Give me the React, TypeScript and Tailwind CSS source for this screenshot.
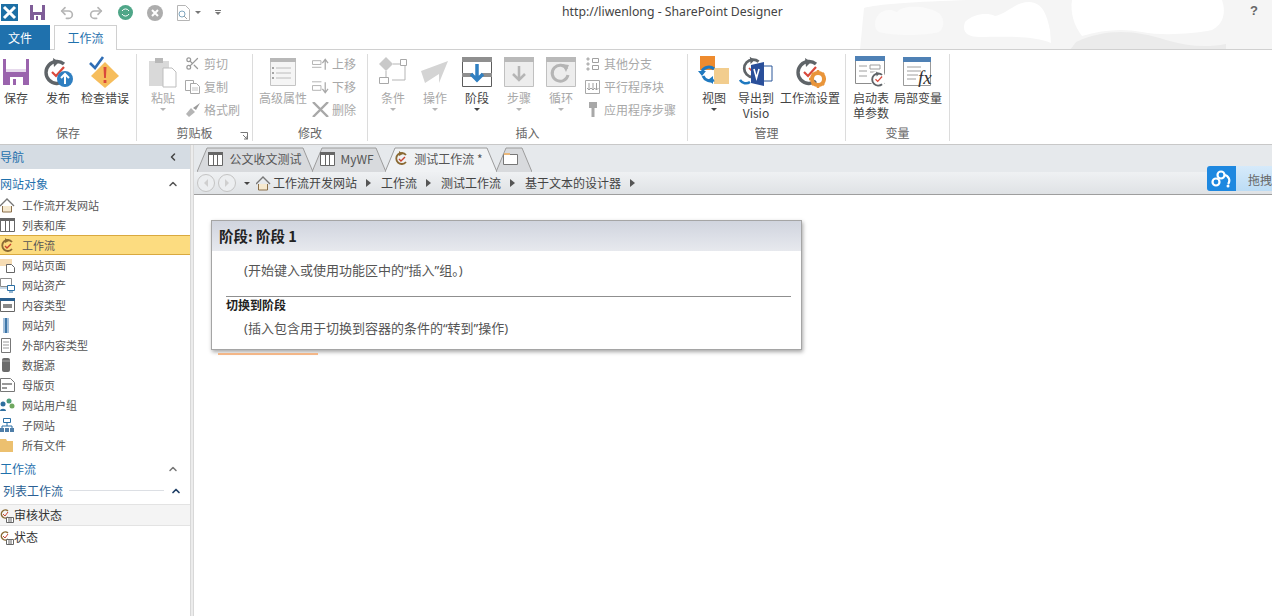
import { Scissors, Undo2, Redo2, ChevronUp, ChevronLeft } from 'lucide-react'
import type { ReactNode } from 'react'

const cjk = "font-['Noto_Sans_CJK_SC','Noto_Sans',sans-serif]"

// Circular arrow used by the workflow commands
function WorkflowArc({ x = 0, y = 0, s = 1, color = '#5f6468' }: { x?: number; y?: number; s?: number; color?: string }) {
  return (
    <g transform={`translate(${x} ${y}) scale(${s})`}>
      <path d="M22 7A11 11 0 1 0 22 24" fill="none" stroke={color} strokeWidth="3.4" />
      <path d="M11 1l6 4-5 5z" fill={color} />
      <path d="M10 15l4 4 8-9" fill="none" stroke="#d9483b" strokeWidth="2.2" />
    </g>
  )
}

function SaveBig() {
  return (
    <svg width="26" height="26" viewBox="0 0 26 26">
      <path d="M0 0h26v26H0z" fill="#9a63ad" />
      <path d="M3 0h20v13H3z" fill="#fff" />
      <path d="M3 10h20v3H3z" fill="#e6d9ec" />
      <path d="M7 18h13v8H7z" fill="#fff" />
      <path d="M10 20h3v6h-3z" fill="#9a63ad" />
    </svg>
  )
}

function PublishIcon() {
  return (
    <svg width="32" height="32" viewBox="0 0 32 32">
      <WorkflowArc x={0} y={1} />
      <circle cx="23" cy="23" r="8" fill="#2f7fc1" />
      <path d="M23 28v-9M19 22l4-4 4 4" fill="none" stroke="#fff" strokeWidth="2" />
    </svg>
  )
}

function CheckErrorIcon() {
  return (
    <svg width="32" height="32" viewBox="0 0 32 32">
      <path d="M16 6l14 14-14 12L2 20z" fill="#f6bd5c" />
      <path d="M14.5 11h3l-.6 11h-1.800zM14.600 24h2.800v3h-2.800z" fill="#d9483b" />
      <path d="M1 7l5 5 8-11" fill="none" stroke="#2f6db5" strokeWidth="2.6" />
    </svg>
  )
}

function PasteIcon() {
  return (
    <svg width="30" height="32" viewBox="0 0 30 32">
      <path d="M1 5h20v25H1z" fill="#d9d9d9" />
      <path d="M7 2h8v5H7z" fill="#b8b8b8" />
      <path d="M15 12h9l4 4v15H15z" fill="#fff" stroke="#bdbdbd" />
    </svg>
  )
}

function ListWindow() {
  return (
    <svg width="26" height="28" viewBox="0 0 26 28">
      <path d="M.5 .5h25v27H.5z" fill="#f5f5f5" stroke="#c4c4c4" />
      <path d="M0 0h26v4H0z" fill="#b8b8b8" />
      <path d="M6 10h15M6 15h15M6 20h15" stroke="#bcbcbc" />
      <path d="M2 9h2v2H2zM2 14h2v2H2zM2 19h2v2H2z" fill="#a5a5a5" />
    </svg>
  )
}

function ConditionIcon() {
  return (
    <svg width="30" height="30" viewBox="0 0 30 30">
      <path d="M8 0l7 7-7 7-7-7z" fill="#c9c9c9" />
      <path d="M15 7h8M8 14v9M14 23h13V9" fill="none" stroke="#b5b5b5" />
      <path d="M22.500 2.500h6v6h-6zM1.500 20.500h9v6h-9z" fill="#fff" stroke="#a8a8a8" />
    </svg>
  )
}

function ActionIcon() {
  return (
    <svg width="30" height="24" viewBox="0 0 30 24">
      <path d="M1 11L28 1 19 23v-9L5 23z" fill="#d4d4d4" />
    </svg>
  )
}

function StageIcon() {
  return (
    <svg width="30" height="30" viewBox="0 0 30 30">
      <path d="M.5 .5h29v29H.5z" fill="#fff" stroke="#5c5c5c" />
      <path d="M0 0h30v5H0zM0 16h11v4H0zM19 16h11v4H19z" fill="#8f8f8f" />
      <path d="M15 7v15M9 17l6 6 6-6" fill="none" stroke="#2f7fc1" strokeWidth="3.500" />
    </svg>
  )
}

function GrayWindow({ loop }: { loop?: boolean }) {
  return (
    <svg width="30" height="30" viewBox="0 0 30 30">
      <path d="M.5 .5h29v29H.5z" fill="#ededed" stroke="#c0c0c0" />
      <path d="M0 0h30v5H0z" fill="#b9b9b9" />
      {loop ? (
        <>
          <path d="M21 12a8 8 0 1 0 1 6" fill="none" stroke="#b5b5b5" strokeWidth="3" />
          <path d="M16 7l7 1-3 7z" fill="#b5b5b5" />
        </>
      ) : (
        <path d="M15 9v13M9 17l6 6 6-6" fill="none" stroke="#b5b5b5" strokeWidth="2.500" />
      )}
    </svg>
  )
}

function ViewIcon() {
  return (
    <svg width="32" height="32" viewBox="0 0 32 32">
      <path d="M2 0h15v14H2z" fill="#ee8b2e" />
      <path d="M16 12h15v16H16z" fill="#f2cd8e" />
      <path d="M16 13a8 8 0 0 0-12 2M5 20a8 8 0 0 0 11 4" fill="none" stroke="#1f79c0" strokeWidth="3" />
      <path d="M0 15h8l-4 5zM15 20v8l-5-4z" fill="#1f79c0" />
    </svg>
  )
}

function VisioIcon() {
  return (
    <svg width="34" height="32" viewBox="0 0 34 32">
      <WorkflowArc x={2} y={0} s={0.8} />
      <path d="M1 24a7 7 0 0 0 10 2" fill="none" stroke="#1f79c0" strokeWidth="2.500" />
      <path d="M22 10h11v15H22z" fill="#fff" stroke="#2a5699" />
      <path d="M12 9l13-3v24l-13-3z" fill="#2a4f9a" />
      <path d="M15 13l2.500 9 2.500-9" fill="none" stroke="#fff" strokeWidth="1.600" />
    </svg>
  )
}

function WorkflowSettings() {
  return (
    <svg width="32" height="32" viewBox="0 0 32 32">
      <WorkflowArc x={0} y={1} />
      <circle cx="24" cy="23" r="6" fill="none" stroke="#e9953a" strokeWidth="4" />
      <path d="M24 14v3M24 29v3M15 23h3M30 23h2M18 17l2 2M28 27l2 2M30 17l-2 2M20 27l-2 2" stroke="#e9953a" strokeWidth="2.500" />
    </svg>
  )
}

function FormParams() {
  return (
    <svg width="32" height="32" viewBox="0 0 32 32">
      <path d="M.5 .5h29v27H.5z" fill="#fff" stroke="#8c8c8c" />
      <path d="M0 0h30v5H0z" fill="#4f81b5" />
      <path d="M4 10h8M4 15h8M4 20h8M15 9h10v4H15zM15 16h6" fill="none" stroke="#9e9e9e" />
      <circle cx="23" cy="23" r="8" fill="#fff" />
      <WorkflowArc x={15} y={15} s={0.55} />
    </svg>
  )
}

function LocalVars() {
  return (
    <svg width="30" height="30" viewBox="0 0 30 30">
      <path d="M.5 .5h27v28H.5z" fill="#fff" stroke="#9a9a9a" />
      <path d="M0 0h28v5H0z" fill="#4f81b5" />
      <path d="M4 10h14M4 14h14M4 18h11M4 22h9" stroke="#9e9e9e" />
      <text x="15" y="27" fontSize="19" fontStyle="italic" fontFamily="Liberation Serif, serif" fill="#333">fx</text>
    </svg>
  )
}

function Caret({ gray }: { gray?: boolean }) {
  return <span className={`mt-[3px] h-0 w-0 border-x-[3px] border-t-[3px] border-x-transparent ${gray ? 'border-t-[#b5b5b5]' : 'border-t-[#444]'}`} />
}

function BigButton({ w, icon, label, gray, caret }: { w: number; icon: ReactNode; label: ReactNode; gray?: boolean; caret?: boolean }) {
  return (
    <div className="flex flex-col items-center" style={{ width: w }}>
      <div className="flex h-[32px] items-center justify-center">{icon}</div>
      <div className={`mt-[2px] whitespace-nowrap text-center text-[12px] leading-[15px] ${gray ? 'text-[#a8a8a8]' : 'text-[#444]'}`}>{label}</div>
      {caret && <Caret gray={gray} />}
    </div>
  )
}

function SmallButton({ icon, label }: { icon: ReactNode; label: string }) {
  return (
    <div className="flex h-[23px] items-center gap-[3px] whitespace-nowrap text-[12px] text-[#a8a8a8]">
      <span className="flex w-[17px] justify-center">{icon}</span>
      {label}
    </div>
  )
}

function Group({ w, title, launcher, children }: { w: number; title: string; launcher?: boolean; children: ReactNode }) {
  return (
    <div className="relative flex h-[87px] shrink-0 flex-col border-r border-[#dcdcdc]" style={{ width: w }}>
      <div className="flex h-[71px] pt-[2px]">{children}</div>
      <div className="text-center text-[12px] leading-[16px] text-[#666]">{title}</div>
      {launcher && (
        <svg className="absolute bottom-[1px] right-[4px]" width="8" height="8" viewBox="0 0 8 8">
          <path d="M.5 .5h7v7M3 3l4 4M7 4v3H4" fill="none" stroke="#777" />
        </svg>
      )}
    </div>
  )
}

function Ribbon() {
  return (
    <div className="flex h-[95px] border-b border-[#c8c8c8] bg-white pt-[4px]">
      <Group w={137} title="保存">
        <BigButton w={32} icon={<SaveBig />} label="保存" />
        <BigButton w={52} icon={<PublishIcon />} label="发布" />
        <BigButton w={42} icon={<CheckErrorIcon />} label="检查错误" />
      </Group>
      <Group w={116} title="剪贴板" launcher>
        <div className="ml-[11px] mr-[6px]">
          <BigButton w={30} icon={<PasteIcon />} label="粘贴" gray caret />
        </div>
        <div className="-mt-[4px] flex flex-col">
          <SmallButton icon={<Scissors size={15} color="#9a9a9a" />} label="剪切" />
          <SmallButton
            icon={
              <svg width="16" height="15" viewBox="0 0 16 15">
                <path d="M.5 1.500h8v10h-8z" fill="#fff" stroke="#a8a8a8" />
                <path d="M5.500 4.500h6l3 3v7h-9z" fill="#fff" stroke="#a8a8a8" />
                <path d="M7 9h6M7 11h6" stroke="#c4c4c4" />
              </svg>
            }
            label="复制"
          />
          <SmallButton
            icon={
              <svg width="16" height="15" viewBox="0 0 16 15">
                <path d="M1 12l5-6 4 4-6 5z" fill="#b5b5b5" />
                <path d="M8 6l7-5-4 7z" fill="#9a9a9a" />
              </svg>
            }
            label="格式刷"
          />
        </div>
      </Group>
      <Group w={115} title="修改">
        <div className="ml-[5px] mr-[4px]">
          <BigButton w={50} icon={<ListWindow />} label="高级属性" gray />
        </div>
        <div className="-mt-[4px] flex flex-col">
          <SmallButton
            icon={
              <svg width="18" height="14" viewBox="0 0 18 14">
                <path d="M.5 3.500h9v4h-9zM0 10.500h10" fill="none" stroke="#b0b0b0" />
                <path d="M14 13V3M11 6l3-4 3 4" fill="none" stroke="#a8a8a8" strokeWidth="1.300" />
              </svg>
            }
            label="上移"
          />
          <SmallButton
            icon={
              <svg width="18" height="14" viewBox="0 0 18 14">
                <path d="M0 1.500h10M.5 5.500h9v5h-9z" fill="none" stroke="#b0b0b0" />
                <path d="M14 2v10M11 9l3 4 3-4" fill="none" stroke="#a8a8a8" strokeWidth="1.300" />
              </svg>
            }
            label="下移"
          />
          <SmallButton
            icon={
              <svg width="17" height="15" viewBox="0 0 17 15">
                <path d="M1 0l15 15M16 0L1 15" stroke="#a8a8a8" strokeWidth="2.400" />
              </svg>
            }
            label="删除"
          />
        </div>
      </Group>
      <Group w={320} title="插入">
        <div className="ml-[4px] flex">
          <BigButton w={42} icon={<ConditionIcon />} label="条件" gray caret />
          <BigButton w={42} icon={<ActionIcon />} label="操作" gray caret />
          <BigButton w={42} icon={<StageIcon />} label="阶段" caret />
          <BigButton w={42} icon={<GrayWindow />} label="步骤" gray caret />
          <BigButton w={42} icon={<GrayWindow loop />} label="循环" gray caret />
        </div>
        <div className="-mt-[4px] ml-[2px] flex flex-col">
          <SmallButton
            icon={
              <svg width="14" height="14" viewBox="0 0 14 14">
                <path d="M2 0l2 2-2 2-2-2zM2 5l2 2-2 2-2-2zM2 10l2 2-2 2-2-2z" fill="#b5b5b5" />
                <path d="M6.500 1.500h6v4h-6zM6.500 8.500h6v4h-6z" fill="#fff" stroke="#a0a0a0" />
              </svg>
            }
            label="其他分支"
          />
          <SmallButton
            icon={
              <svg width="15" height="14" viewBox="0 0 15 14">
                <path d="M.5 .5h14v13H.5z" fill="#fff" stroke="#a8a8a8" />
                <path d="M4 3v7M2 8l2 2 2-2M8 3v7M6 8l2 2 2-2M11.500 3v7M9.500 8l2 2 2-2" fill="none" stroke="#a0a0a0" />
              </svg>
            }
            label="平行程序块"
          />
          <SmallButton
            icon={
              <svg width="10" height="15" viewBox="0 0 10 15">
                <path d="M1 0h8v6H6.500v9h-3V6H1z" fill="#a8a8a8" />
              </svg>
            }
            label="应用程序步骤"
          />
        </div>
      </Group>
      <Group w={158} title="管理">
        <div className="ml-[5px] flex">
          <BigButton w={42} icon={<ViewIcon />} label="视图" caret />
          <BigButton w={42} icon={<VisioIcon />} label={<>导出到<br />Visio</>} />
          <BigButton w={66} icon={<WorkflowSettings />} label="工作流设置" />
        </div>
      </Group>
      <Group w={104} title="变量">
        <div className="ml-[4px] flex">
          <BigButton w={42} icon={<FormParams />} label={<>启动表<br />单参数</>} />
          <BigButton w={52} icon={<LocalVars />} label="局部变量" />
        </div>
      </Group>
    </div>
  )
}

function QuickAccess() {
  return (
    <div className="relative flex h-[25px] items-center bg-white">
      {/* cloud pattern behind the right end of the title bar */}
      <svg className="absolute right-0 top-0" width="412" height="50" viewBox="0 0 412 50">
        <path d="M0 50L4 8C40-4 380-4 412 0v50z" fill="#f5f5f5" />
        <path d="M15 24c0-10 10-18 22-12 6-8 30-6 40 0 8 4 8 16 2 20-14 4-46 4-60 0-3-2-4-4-4-8z" fill="#fafafa" />
        <path d="M105 22c8-8 22-10 30-6 12-2 20-14 34-14 14 0 18 14 21 28l1 13c-18-8-50-6-72-6-10 0-18-4-14-15z" fill="#fff" />
        <path d="M212 0h150c4 12 2 24-10 30-20 4-50 6-70 2-20-4-40-2-60 4-8-10-12-24-10-36z" fill="#fff" />
        <path d="M216 42c30-14 60-12 90-2 20 6 40 8 60 4v6H210z" fill="#ebebeb" />
      </svg>
      <div className="relative flex w-[18px] items-center justify-center">
        <svg width="17" height="17" viewBox="0 0 17 17">
          <path d="M0 0h17v17H0z" fill="#1d6fa5" />
          <path d="M3 3l11 11M14 3L3 14" stroke="#fff" strokeWidth="3" />
        </svg>
      </div>
      <div className="relative ml-[12px] flex items-center">
        <svg width="15" height="15" viewBox="0 0 15 15">
          <path d="M0 0h15v15H0z" fill="#7f5d98" />
          <path d="M3 0h9v7H3zM4 10h7v5H4z" fill="#fff" />
          <path d="M6 11h2v4H6z" fill="#7f5d98" />
        </svg>
        <Undo2 className="ml-[14px]" size={16} color="#b5b5b5" strokeWidth={2.5} />
        <Redo2 className="ml-[13px]" size={16} color="#b5b5b5" strokeWidth={2.5} />
        <svg className="ml-[14px]" width="15" height="15" viewBox="0 0 15 15">
          <circle cx="7.500" cy="7.500" r="7.500" fill="#4fa688" />
          <path d="M4 6a4 4 0 0 1 7 0M11 9a4 4 0 0 1-7 0" fill="none" stroke="#fff" />
        </svg>
        <svg className="ml-[14px]" width="16" height="16" viewBox="0 0 16 16">
          <circle cx="8" cy="8" r="8" fill="#adadad" />
          <path d="M5 5l6 6M11 5l-6 6" stroke="#fff" strokeWidth="2" />
        </svg>
        <svg className="ml-[13px]" width="16" height="16" viewBox="0 0 16 16">
          <path d="M1.500 .5h8l4 4v11h-12z" fill="#fff" stroke="#b5b5b5" />
          <circle cx="6" cy="9" r="3" fill="none" stroke="#7fa6bf" />
          <path d="M8 11l3 3" stroke="#a0a0a0" />
        </svg>
        <span className="ml-[3px] h-0 w-0 border-x-[3px] border-t-[3px] border-x-transparent border-t-[#777]" />
        <span className="ml-[14px] flex flex-col items-center gap-[1px]">
          <span className="h-px w-[6px] bg-[#777]" />
          <span className="h-0 w-0 border-x-[3px] border-t-[3px] border-x-transparent border-t-[#777]" />
        </span>
      </div>
      <div className="absolute left-[562px] top-[3px] font-['Noto_Sans',sans-serif] text-[12.25px] leading-[18px] whitespace-nowrap text-[#444]">http://liwenlong - SharePoint Designer</div>
      <div className="absolute right-[14px] top-[1px] font-['Liberation_Sans',sans-serif] text-[13px] font-bold text-[#666]">?</div>
    </div>
  )
}

function RibbonTabs() {
  return (
    <div className="relative flex h-[25px] border-b border-[#d0d0d0]">
      <div className="flex h-[25px] w-[50px] items-center bg-[#1f71ad] pl-[8px] text-[12px] text-white">文件</div>
      <div className="relative ml-[4px] flex h-[25px] w-[63px] items-center justify-center border-x border-t border-[#d0d0d0] bg-white text-[12px] text-[#1f71ad]">工作流</div>
    </div>
  )
}

const SiteIcons: Record<string, ReactNode> = {
  home: (
    <svg width="15" height="15" viewBox="0 0 15 15">
      <path d="M2.500 8v6h9V8" fill="#f6e9cf" stroke="#8a6f4a" />
      <path d="M0 8l7-7 7 7" fill="none" stroke="#777" strokeWidth="1.400" />
    </svg>
  ),
  table: (
    <svg width="15" height="14" viewBox="0 0 15 14">
      <path d="M.5 .5h14v13H.5z" fill="#fff" stroke="#666" />
      <path d="M0 0h15v3H0z" fill="#666" />
      <path d="M5.500 3v10M9.500 3v10" stroke="#666" />
    </svg>
  ),
  flow: (
    <svg width="15" height="15" viewBox="0 0 15 15">
      <path d="M12 4a5.500 5.500 0 1 0 0 7" fill="none" stroke="#8a6a34" strokeWidth="1.800" />
      <path d="M5 0l4 3-4 2z" fill="#8a6a34" />
      <path d="M5 8l2 2 4-4" fill="none" stroke="#c8432f" strokeWidth="1.400" />
    </svg>
  ),
  page: (
    <svg width="15" height="15" viewBox="0 0 15 15">
      <path d="M0 1h12v7H0z" fill="#f6dcb4" />
      <path d="M6.500 6.500h5l3 3v5h-8z" fill="#fff" stroke="#666" />
    </svg>
  ),
  assets: (
    <svg width="15" height="15" viewBox="0 0 15 15">
      <path d="M.5 .5h11v8H.5z" fill="#fff" stroke="#8c8c8c" />
      <path d="M0 9h7v2H0z" fill="#c9d9e6" />
      <path d="M7.500 7.500h7v5h-7z" fill="#fff" stroke="#2a6fa5" />
      <path d="M9 14h4" stroke="#2a6fa5" />
    </svg>
  ),
  ctype: (
    <svg width="15" height="14" viewBox="0 0 15 14">
      <path d="M.5 .5h14v13H.5z" fill="#fff" stroke="#666" />
      <path d="M0 0h15v3H0z" fill="#2a5f8e" />
      <path d="M3 6h9v4H3z" fill="#888" />
    </svg>
  ),
  column: (
    <svg width="15" height="15" viewBox="0 0 15 15">
      <path d="M3 0h6v15H3z" fill="#a5c1dc" />
      <path d="M5 0h2v15H5z" fill="#3e76a8" />
    </svg>
  ),
  external: (
    <svg width="15" height="15" viewBox="0 0 15 15">
      <path d="M1.500 .5h9v14h-9z" fill="#fff" stroke="#777" />
      <path d="M3 4h6M3 7h6M3 10h6" stroke="#999" />
    </svg>
  ),
  db: (
    <svg width="15" height="15" viewBox="0 0 15 15">
      <rect x="2" y="0" width="8" height="14" rx="2" fill="#6b6b6b" />
      <path d="M2 3h8" stroke="#a5a5a5" />
    </svg>
  ),
  master: (
    <svg width="15" height="14" viewBox="0 0 15 14">
      <path d="M.5 .5h10l4 4v9H.5z" fill="#fff" stroke="#777" />
      <path d="M2 5h10v2H2zM2 9h5v2H2z" fill="#999" />
    </svg>
  ),
  group: (
    <svg width="15" height="14" viewBox="0 0 15 14">
      <circle cx="3" cy="6" r="2.500" fill="#2f6f9f" />
      <circle cx="9" cy="3" r="2.500" fill="#4e9b7a" />
      <circle cx="12" cy="8" r="2.500" fill="#6fa85f" />
      <path d="M0 13c0-3 6-3 6 0z" fill="#2f6f9f" />
    </svg>
  ),
  sub: (
    <svg width="15" height="14" viewBox="0 0 15 14">
      <path d="M3.500 .5h7v4h-7zM7 5v3M2 8h10v2M2 8v2" fill="none" stroke="#2a6fa5" />
      <path d="M0 10h4v4H0zM5 10h4v4H5zM10 10h4v4h-4z" fill="#4f7ea8" />
    </svg>
  ),
  files: (
    <svg width="15" height="13" viewBox="0 0 15 13">
      <path d="M0 0h6l1 2h6v11H0z" fill="#ecc06f" />
    </svg>
  ),
}

const siteObjects = [
  ['home', '工作流开发网站'],
  ['table', '列表和库'],
  ['flow', '工作流'],
  ['page', '网站页面'],
  ['assets', '网站资产'],
  ['ctype', '内容类型'],
  ['column', '网站列'],
  ['external', '外部内容类型'],
  ['db', '数据源'],
  ['master', '母版页'],
  ['group', '网站用户组'],
  ['sub', '子网站'],
  ['files', '所有文件'],
]

function ListFlowIcon() {
  return (
    <svg className="shrink-0" width="14" height="15" viewBox="0 0 14 15">
      <path d="M8 3a4 4 0 1 0 0 6" fill="none" stroke="#8a6a34" strokeWidth="1.500" />
      <path d="M3 6l2 2 3-4" fill="none" stroke="#c8432f" />
      <path d="M6.500 9.500h7v5h-7z" fill="#fff" stroke="#666" />
      <path d="M9 10v4M11 10v4" stroke="#666" />
    </svg>
  )
}

function NavPane() {
  return (
    <aside className="w-[190px] shrink-0 bg-white">
      <div className="flex h-[24px] items-center justify-between bg-[#d5dce3] pr-[11px]">
        <span className="text-[12px] text-[#1f71ad]">导航</span>
        <ChevronLeft size={12} color="#444" strokeWidth={3} />
      </div>
      <div className="flex h-[30px] items-center justify-between pr-[11px]">
        <span className="text-[12px] text-[#1f71ad]">网站对象</span>
        <ChevronUp size={12} color="#555" strokeWidth={3} />
      </div>
      <div className="-mt-[4px]">
        {siteObjects.map(([icon, label]) => (
          <div
            key={label}
            className={`flex h-[20px] items-center text-[11px] text-[#555] ${label === '工作流' ? 'border-y border-[#d9a93f] bg-[#fcdc80]' : ''}`}
          >
            <span className="flex w-[22px] items-center">{SiteIcons[icon]}</span>
            {label}
          </div>
        ))}
      </div>
      <div className="flex h-[25px] items-center justify-between pr-[11px] pt-[2px]">
        <span className="text-[12px] text-[#1f71ad]">工作流</span>
        <ChevronUp size={12} color="#777" strokeWidth={3} />
      </div>
      <div className="flex h-[21px] items-center pl-[3px] pr-[8px]">
        <span className="text-[12px] text-[#2b5f94]">列表工作流</span>
        <span className="mx-[6px] h-px flex-1 bg-[#dcdfe4]" />
        <ChevronUp size={12} color="#1f3f66" strokeWidth={3.5} />
      </div>
      <div className="mt-[3px] flex h-[22px] items-center border-y border-[#e3e3e3] bg-[#f4f4f4] text-[12px] text-[#333]">
        <ListFlowIcon />
        审核状态
      </div>
      <div className="flex h-[22px] items-center text-[12px] text-[#333]">
        <ListFlowIcon />
        状态
      </div>
    </aside>
  )
}

function DocTab({ w, active, shift = 0, children }: { w: number; active?: boolean; shift?: number; children: ReactNode }) {
  return (
    <div className="relative -ml-[1px] flex h-[25px] items-center justify-center" style={{ width: w }}>
      <svg className="absolute inset-0 h-full w-full" viewBox={`0 0 ${w} 25`} preserveAspectRatio="none">
        <path
          d={`M0 25L10 1H${w - 10}L${w} 25`}
          fill={active ? '#f0f2f4' : '#d8dadd'}
          stroke="#9c9c9c"
        />
      </svg>
      <div className="relative -mt-[2px] flex items-center gap-[5px] text-[12px] text-[#555]" style={{ paddingRight: shift }}>{children}</div>
    </div>
  )
}

function Crumb({ children }: { children: ReactNode }) {
  return (
    <>
      <span className="whitespace-nowrap text-[12px] text-[#444]">{children}</span>
      <span className="ml-[9px] mr-[10px] h-0 w-0 border-y-[4px] border-l-[5px] border-y-transparent border-l-[#555]" />
    </>
  )
}

function HistoryButton({ forward }: { forward?: boolean }) {
  return (
    <span className="flex h-[18px] w-[18px] items-center justify-center rounded-full border border-[#c4c4c4] bg-[#eceef0]">
      <span className={`h-0 w-0 border-y-[4px] border-y-transparent ${forward ? 'border-l-[4px] border-l-[#cfcfcf]' : 'border-r-[4px] border-r-[#cfcfcf]'}`} />
    </span>
  )
}

function StageCard() {
  return (
    <div className="relative ml-[17px] mt-[25px] w-[591px]">
      <div className="border border-[#a5a5a5] bg-white shadow-[1px_2px_4px_rgba(0,0,0,0.35)]">
        <div className="flex h-[30px] items-center bg-gradient-to-b from-[#d0d4de] to-[#e7e9ee] pl-[7px] text-[14.5px] font-bold text-[#222]">阶段: 阶段 1</div>
        <div className="h-[98px] pl-[14px] pr-[10px] text-[#555]">
          <div className="pl-[18px] pt-[10px] font-['Noto_Sans','Noto_Sans_CJK_SC',sans-serif] text-[13px] leading-[18px]">(开始键入或使用功能区中的“插入”组。)</div>
          <div className="mt-[17px] border-t border-[#8f8f8f] text-[12px] font-bold leading-[16px] text-[#222]">切换到阶段</div>
          <div className="pl-[18px] pt-[6px] font-['Noto_Sans','Noto_Sans_CJK_SC',sans-serif] text-[13px] leading-[18px]">(插入包含用于切换到容器的条件的“转到”操作)</div>
        </div>
      </div>
      <div className="ml-[7px] mt-[3px] h-[2px] w-[100px] bg-[#f3b687]" />
    </div>
  )
}

export default function App() {
  return (
    <div className={`relative h-[616px] w-[1272px] overflow-hidden bg-white ${cjk}`}>
      <QuickAccess />
      <RibbonTabs />
      <Ribbon />
      <div className="flex h-[471px]">
        <NavPane />
        <div className="w-[4px] shrink-0 border-x border-[#d8d8d8] bg-[#ececec]" />
        <main className="min-w-0 flex-1">
          <div className="flex h-[27px] items-end bg-[#e6e9ec] pl-[4px]">
            <DocTab w={116}>{SiteIcons.table}<span className="ml-[1px]">公文收文测试</span></DocTab>
            <DocTab w={74} shift={4}>{SiteIcons.table}MyWF</DocTab>
            <DocTab w={112} active shift={5}>{SiteIcons.flow}测试工作流 *</DocTab>
            <DocTab w={36} shift={8}>
              <svg width="15" height="13" viewBox="0 0 15 13">
                <path d="M.5 2.500h14v10H.5z" fill="#fff" stroke="#777" />
                <path d="M1 1h6v2H1z" fill="#e9b77a" />
              </svg>
            </DocTab>
          </div>
          <div className="flex h-[23px] items-center border-b border-[#9e9e9e] bg-gradient-to-b from-[#eff1f3] to-[#dfe2e5] pl-[3px]">
            <HistoryButton />
            <span className="ml-[3px]"><HistoryButton forward /></span>
            <span className="ml-[8px] mr-[6px] h-0 w-0 border-x-[3px] border-t-[3px] border-x-transparent border-t-[#444]" />
            <span className="mr-[2px]">{SiteIcons.home}</span>
            <Crumb>工作流开发网站</Crumb>
            <Crumb>工作流</Crumb>
            <Crumb>测试工作流</Crumb>
            <Crumb>基于文本的设计器</Crumb>
          </div>
          <StageCard />
        </main>
      </div>
      {/* upload helper docked over the right edge */}
      <div className="absolute right-0 top-[166px] flex h-[25px] w-[65px] overflow-hidden rounded-l-[3px] bg-gradient-to-b from-[#d6eafa] to-[#bcdcf5]">
        <div className="flex w-[30px] items-center justify-center bg-[#1e88e0]">
          <svg width="20" height="18" viewBox="0 0 20 18">
            <circle cx="10" cy="5" r="3.500" fill="none" stroke="#fff" strokeWidth="2.200" />
            <circle cx="5" cy="12" r="3.500" fill="none" stroke="#fff" strokeWidth="2.200" />
            <path d="M13 5a5.500 5.500 0 0 1 4 9" fill="none" stroke="#fff" strokeWidth="2.200" />
            <circle cx="17" cy="16" r="1.500" fill="#fff" />
          </svg>
        </div>
        <span className="ml-[12px] mt-[6px] whitespace-nowrap text-[12px] leading-[15px] text-[#666]">拖拽</span>
      </div>
    </div>
  )
}
